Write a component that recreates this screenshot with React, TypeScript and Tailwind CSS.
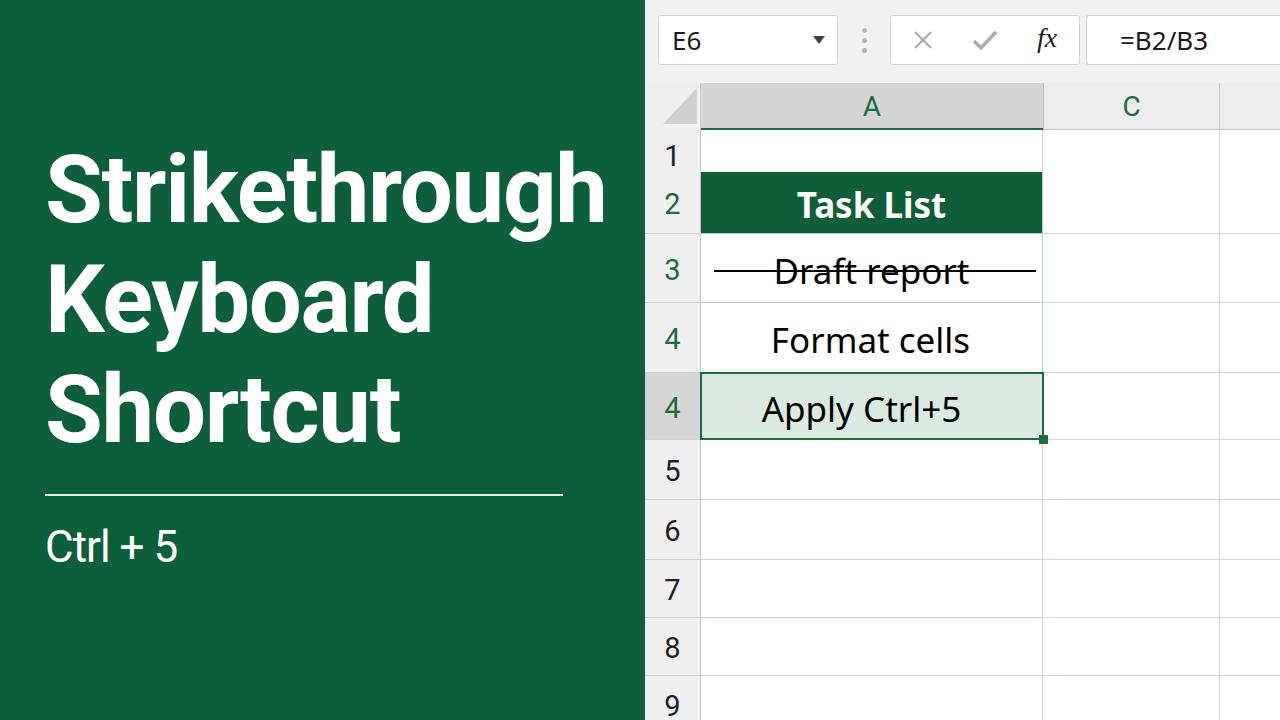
import React from "react";

type Row = {
  label: string;
  h: string;
  green: boolean;
  kind: "empty" | "header" | "strike" | "text" | "selected";
  text?: string;
};

const rows: Row[] = [
  { label: "1", h: "h-[42px]", green: false, kind: "empty" },
  { label: "2", h: "h-[62px]", green: true, kind: "header", text: "Task List" },
  { label: "3", h: "h-[69px]", green: true, kind: "strike", text: "Draft report" },
  { label: "4", h: "h-[70px]", green: true, kind: "text", text: "Format cells" },
  { label: "4", h: "h-[67px]", green: true, kind: "selected", text: "Apply Ctrl+5" },
  { label: "5", h: "h-[60px]", green: false, kind: "empty" },
  { label: "6", h: "h-[60px]", green: false, kind: "empty" },
  { label: "7", h: "h-[58px]", green: false, kind: "empty" },
  { label: "8", h: "h-[58px]", green: false, kind: "empty" },
  { label: "9", h: "h-[58px]", green: false, kind: "empty" },
];

const cellFont = { fontFamily: '"Noto Sans", "Open Sans", sans-serif' };
const numFont = { fontFamily: 'Roboto, "Liberation Sans", sans-serif' };

function CellA({ row }: { row: Row }) {
  if (row.kind === "header") {
    return (
      <div className="flex items-center justify-center bg-[#0f5e37] border-r border-b border-[#b8cfc0] pt-[6px]">
        <span className="text-[35px] font-bold text-white" style={cellFont}>
          {row.text}
        </span>
      </div>
    );
  }
  if (row.kind === "strike") {
    return (
      <div className="relative flex items-center justify-center bg-white border-r border-b border-[#b8cfc0] pt-[6px]">
        <span className="text-[35px] text-black" style={cellFont}>
          {row.text}
        </span>
        <div className="absolute left-[13px] right-[6px] top-[36px] h-[2px] bg-black" />
      </div>
    );
  }
  if (row.kind === "text") {
    return (
      <div className="flex items-center justify-center bg-white border-r border-b border-[#b8cfc0] pt-[6px] pr-[2px]">
        <span className="text-[35px] text-black" style={cellFont}>
          {row.text}
        </span>
      </div>
    );
  }
  if (row.kind === "selected") {
    return (
      <div className="relative flex items-center justify-center bg-[#dbeae0] border-r border-b border-[#b8cfc0] pr-[20px] pt-[6px]">
        <span className="text-[35px] text-black" style={cellFont}>
          {row.text}
        </span>
        <div className="absolute left-[-1px] top-[-1px] right-[-2px] bottom-[-1px] border-2 border-[#1e6b41]" />
        <div className="absolute right-[-6px] bottom-[-5px] w-[9px] h-[9px] bg-[#1e6b41]" />
      </div>
    );
  }
  return <div className="bg-white border-r border-b border-[#c9d8ce]" />;
}

export default function App() {
  return (
    <div className="flex w-[1280px] h-[720px] overflow-hidden">
      {/* left title panel */}
      <div className="w-[645px] h-full shrink-0 bg-[#0d5e3a] pl-[45px] pt-[135px]" style={numFont}>
        <h1 className="text-[94px] leading-[110px] font-bold text-white tracking-[-1.3px]">
          Strikethrough
          <br />
          Keyboard
          <br />
          Shortcut
        </h1>
        <div className="mt-[29px] w-[518px] h-[2px] bg-white/90" />
        <div className="mt-[25px] text-[44px] leading-[52px] tracking-[-1px] text-white">Ctrl + 5</div>
      </div>

      {/* right sheet */}
      <div className="flex-1 flex flex-col bg-white">
        <div className="h-[83px] shrink-0 bg-[#f0f0f0] flex items-start pt-[15px] pl-[13px]">
          <div className="w-[180px] h-[50px] bg-white border border-[#d2d2d2] rounded-[3px] flex items-center pl-[13px] pr-[12px]">
            <span className="text-[26px] text-[#1a1a1a]" style={cellFont}>
              E6
            </span>
            <div className="ml-auto w-0 h-0 border-l-[6px] border-r-[6px] border-t-[8px] border-l-transparent border-r-transparent border-t-[#444]" />
          </div>
          <div className="w-[52px] h-[50px] flex flex-col items-center justify-center gap-[5px]">
            <div className="w-[5px] h-[5px] rounded-full bg-[#b4b4b4]" />
            <div className="w-[5px] h-[5px] rounded-full bg-[#b4b4b4]" />
            <div className="w-[5px] h-[5px] rounded-full bg-[#b4b4b4]" />
          </div>
          <div className="w-[190px] h-[50px] bg-white border border-[#d2d2d2] rounded-[3px] flex items-center">
            <div className="w-[62px] flex justify-center pl-[2px]">
              <svg width="20" height="20" viewBox="0 0 20 20">
                <path d="M2 2 L18 18 M18 2 L2 18" stroke="#ababab" strokeWidth="2.2" fill="none" />
              </svg>
            </div>
            <div className="w-[64px] flex justify-center">
              <svg width="26" height="22" viewBox="0 0 26 22">
                <path d="M2 12 L9 19 L24 3" stroke="#ababab" strokeWidth="3.6" fill="none" />
              </svg>
            </div>
            <div className="w-[60px] flex justify-center">
              <span
                className="text-[28px] italic text-[#222] leading-none pb-[4px]"
                style={{ fontFamily: '"Liberation Serif", "DejaVu Serif", serif' }}
              >
                fx
              </span>
            </div>
          </div>
          <div className="ml-[6px] flex-1 h-[50px] bg-white border border-[#d2d2d2] border-r-0 rounded-l-[3px] flex items-center pl-[33px]">
            <span className="text-[26px] text-[#1a1a1a]" style={cellFont}>
              =B2/B3
            </span>
          </div>
        </div>

        {/* column headers */}
        <div className="grid grid-cols-[56px_342px_177px_1fr] h-[47px] shrink-0 bg-[#efefef]" style={numFont}>
          <div className="flex items-end justify-end pr-[3px] pb-[6px] border-r border-[#c9c9c9]">
            <svg width="34" height="36" viewBox="0 0 34 36">
              <path d="M34 0 L34 36 L0 36 Z" fill="#cfcfcf" />
            </svg>
          </div>
          <div className="flex items-center justify-center bg-[#d5d5d5] border-b-2 border-[#1e6b41] text-[28px] text-[#1e6b41] pt-[2px]">
            A
          </div>
          <div className="flex items-center justify-center bg-[#ececec] border-l border-r border-b border-l-[#bdbdbd] border-r-[#c9c9c9] border-b-[#c6c6c6] text-[28px] text-[#1e6b41] pt-[2px]">
            C
          </div>
          <div className="bg-[#ececec] border-b border-[#c6c6c6]" />
        </div>

        {/* rows */}
        {rows.map((row, i) => (
          <div key={i} className={`grid grid-cols-[56px_342px_177px_1fr] shrink-0 ${row.h}`}>
            <div
              className={`flex items-center justify-center border-r border-b border-r-[#c4c4c4] border-b-[#d0d0d0] text-[29px] pt-[5px] ${
                row.kind === "selected" ? "bg-[#d6d6d6]" : "bg-[#efefef]"
              } ${row.green ? "text-[#1e6b41]" : "text-[#1f1f1f]"}`}
              style={numFont}
            >
              {row.label}
            </div>
            <CellA row={row} />
            <div className="bg-white border-r border-b border-[#d6d6d6]" />
            <div className="bg-white border-b border-[#d6d6d6]" />
          </div>
        ))}
        <div className="grid grid-cols-[56px_342px_177px_1fr] flex-1">
          <div className="bg-[#efefef] border-r border-[#c4c4c4]" />
          <div className="bg-white border-r border-[#c9d8ce]" />
          <div className="bg-white border-r border-[#d6d6d6]" />
          <div className="bg-white" />
        </div>
      </div>
    </div>
  );
}
